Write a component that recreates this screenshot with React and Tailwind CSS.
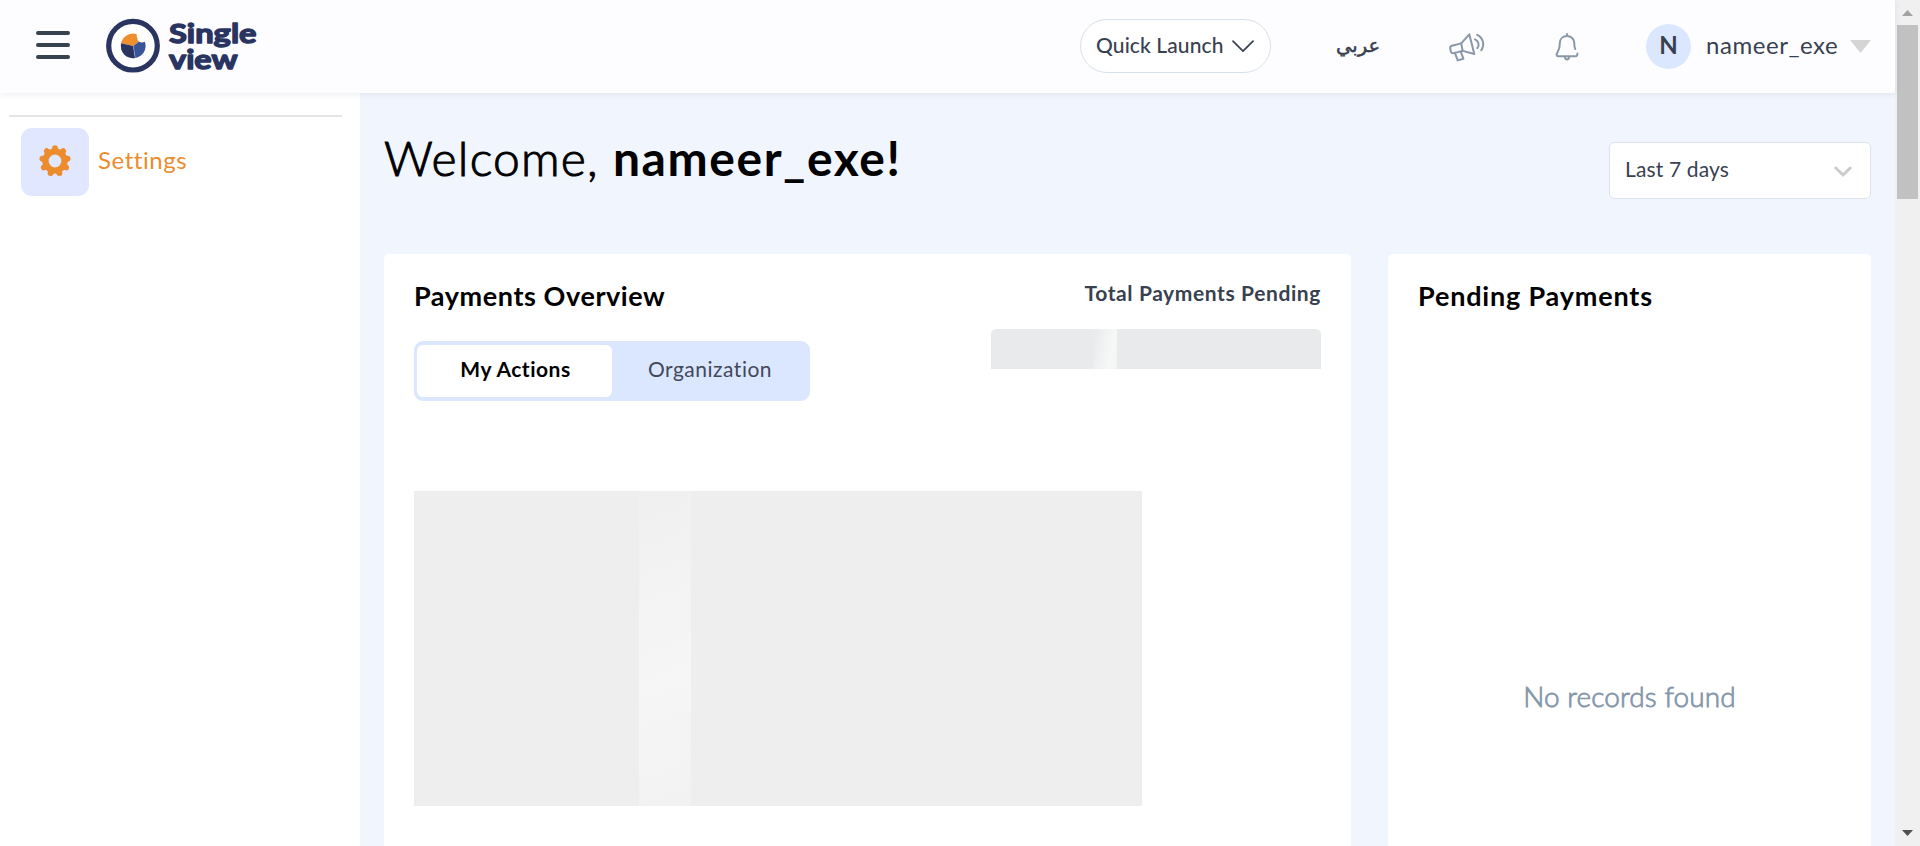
import React from "react";

function HamburgerButton() {
  return (
    <button className="-mt-0.5 flex h-7 w-[34px] flex-col justify-between" aria-label="Menu">
      <span className="h-1 w-full rounded-full bg-[#37444f]" />
      <span className="h-1 w-full rounded-full bg-[#37444f]" />
      <span className="h-1 w-full rounded-full bg-[#37444f]" />
    </button>
  );
}

function Logo() {
  return (
    <svg width="156" height="60" viewBox="0 0 156 60" className="ml-9">
      <circle cx="27" cy="29.7" r="24.3" fill="#fff" stroke="#2a3461" strokeWidth="5.2" />
      <path d="M27.3 30 L15.1 27.2 A12.2 12.2 0 0 1 30.8 18.2 Q30 20.8 31.4 22 Q31 24.6 33 25.6 Z" fill="#ee8e2d" />
      <path d="M27.3 30 L15.1 27.2 A12.2 12.2 0 0 0 29.2 42 Z" fill="#2a3461" />
      <path d="M27.3 30 L33 25.6 Q35.4 27.3 38.9 25.8 A12.2 12.2 0 0 1 29.2 42 Z" fill="#3a5597" />
      <path d="M27.3 30 L29.2 42" stroke="#c9cfe2" strokeWidth="0.4" />
      <g
        fill="#2a3461"
        stroke="#2a3461"
        strokeWidth="1.4"
        strokeLinejoin="round"
        fontFamily="Lato, sans-serif"
        fontWeight="700"
        fontSize="27.5"
      >
        <text x="63" y="27.4" textLength="87.5" lengthAdjust="spacingAndGlyphs">Single</text>
        <text x="63" y="53" textLength="68.5" lengthAdjust="spacingAndGlyphs">view</text>
      </g>
    </svg>
  );
}

function Megaphone() {
  return (
    <svg width="38" height="30" viewBox="0 0 38 30" fill="none" stroke="#8a97a8" strokeWidth="2" strokeLinecap="round" strokeLinejoin="round">
      <path d="M13.2 11.4 L21.3 2.3 L26.3 22 L14.6 18.9 Z" />
      <path d="M13.2 11.4 L4 13.7 Q1.7 14.3 2.2 16.6 L2.9 19.4 Q3.5 21.7 5.8 21.1 L14.6 18.9" />
      <path d="M7 21.2 L9.7 28.4 L15.4 26.7 L12.8 19.8" />
      <path d="M27 7.4 A5.6 5.6 0 0 1 29.3 16.2" />
      <path d="M29.2 2.8 A10.4 10.4 0 0 1 33.2 18.3" />
    </svg>
  );
}

function Bell() {
  return (
    <svg width="24" height="28" viewBox="0 0 24 28" fill="none" stroke="#8a97a8" strokeWidth="2" strokeLinecap="round" strokeLinejoin="round">
      <path d="M12 1 V3" />
      <path d="M20.3 16 Q19.3 14.4 19.3 10.4 C19.3 5.8 16 3 12 3 C8 3 4.8 5.8 4.8 10.4 C4.8 15.6 3.8 17 2.6 19 C1.2 21.6 1.4 23.2 3.2 23.2 H20.4 Q22.6 23.2 22.4 20.6" />
      <path d="M9.9 24.2 Q10.4 26.4 12 26.4 Q13.6 26.4 14.1 24.2" />
    </svg>
  );
}

const TEETH = [0, 40, 80, 120, 160, 200, 240, 280, 320];

function Gear() {
  return (
    <svg width="32" height="32" viewBox="0 0 32 32">
      <circle cx="16" cy="16" r="9.5" fill="none" stroke="#ec8c2c" strokeWidth="6.2" />
      {TEETH.map((a) => (
        <path
          key={a}
          d="M10.6 6 Q13 4.6 13.1 2.8 Q13.4 0.2 16 0.2 Q18.6 0.2 18.9 2.8 Q19 4.6 21.4 6 Z"
          fill="#ec8c2c"
          transform={`rotate(${a} 16 16)`}
        />
      ))}
    </svg>
  );
}

function Header() {
  return (
    <header className="z-10 flex h-[93px] shrink-0 items-center bg-[#fdfdff] pr-6 pl-9 text-[#394150] shadow-[0_1px_6px_rgba(60,70,120,0.10)]">
      <div className="-mt-0.5 flex items-center">
        <HamburgerButton />
        <Logo />
      </div>
      <button className="mb-0.5 ml-auto flex h-[54px] w-[191px] items-center rounded-full border border-[#d8e1ea] bg-white pb-0.5 pl-[15px]">
        <span className="text-[21px] font-medium tracking-[0.1px] whitespace-nowrap">Quick Launch</span>
        <svg width="22" height="13" viewBox="0 0 22 13" className="mt-1 ml-2" fill="none" stroke="#394150" strokeWidth="1.7" strokeLinecap="round" strokeLinejoin="round">
          <path d="M1 1.2 L11 11.2 L21 1.2" />
        </svg>
      </button>
      <span className="mb-0.5 ml-16 w-[46px] text-center font-['DejaVu_Sans',sans-serif] text-[19.5px] leading-6 [-webkit-text-stroke:0.5px_#394150]">عربي</span>
      <span className="ml-[67px]"><Megaphone /></span>
      <span className="ml-[69px]"><Bell /></span>
      <div className="ml-[67px] flex size-[45px] items-center justify-center rounded-full bg-[#dbe7ff] pb-[3px] text-2xl font-bold">N</div>
      <span className="ml-[15px] w-[133px] pb-1 text-2xl tracking-[0.55px] whitespace-nowrap">nameer_exe</span>
      <svg width="21" height="13" viewBox="0 0 21 13" className="ml-[11px]">
        <path d="M0 0 H21 L10.5 13 Z" fill="#d5d5d5" />
      </svg>
    </header>
  );
}

function Sidebar() {
  return (
    <aside className="w-[360px] shrink-0 bg-white pt-[22px]">
      <div className="ml-[9px] h-[2px] w-[333px] bg-[#e5e5e5]" />
      <a className="mt-[11px] ml-[21px] flex items-center">
        <span className="flex size-[68px] items-center justify-center rounded-[11px] bg-[#e1e7ff] pb-0.5">
          <Gear />
        </span>
        <span className="ml-[9px] pb-[5px] text-2xl tracking-[0.55px] text-[#ec8c2c]">Settings</span>
      </a>
    </aside>
  );
}

function PaymentsOverview() {
  return (
    <section className="h-[700px] w-[967px] rounded-[5px] bg-white px-[30px]">
      <div className="flex justify-between">
        <div className="pt-[22px]">
          <h2 className="h-10 text-[27px] leading-10 font-bold tracking-[0.58px] text-black">Payments Overview</h2>
          <div className="mt-[25px] flex h-[60px] w-[396px] items-center rounded-[9px] bg-[#dbe7ff] pl-[3px] text-[21px] tracking-[0.5px]">
            <div className="flex h-[52px] w-[195px] items-center justify-center rounded-md bg-white pb-1 pl-0.5 font-bold text-black">My Actions</div>
            <div className="flex h-[52px] flex-1 items-center justify-center pr-0.5 pb-1 text-[#42485a]">Organization</div>
          </div>
        </div>
        <div className="flex w-[330px] flex-col pt-[23px]">
          <h3 className="text-right text-[21px] leading-8 font-bold tracking-[0.6px] text-[#394150]">Total Payments Pending</h3>
          <div className="mt-5 flex h-10 overflow-hidden rounded-t-[5px] bg-[#e9eaeb]">
            <div className="ml-[102px] w-6 bg-[linear-gradient(100deg,#eaebec_10%,#f7f8f7_75%,#f1f2f2_100%)]" />
          </div>
        </div>
      </div>
      <div className="mt-[90px] flex h-[315px] w-[728px] bg-[#eeeeee]">
        <div className="ml-[225px] w-[52px] bg-[linear-gradient(160deg,#f0f0f0_5%,#f6f6f6_60%,#f1f1f1_105%)]" />
      </div>
    </section>
  );
}

function PendingPayments() {
  return (
    <section className="h-[700px] w-[483px] rounded-[5px] bg-white px-[30px] pt-[22px]">
      <h2 className="h-10 text-[27px] leading-10 font-bold tracking-[0.82px] text-black">Pending Payments</h2>
      <p className="mt-[360px] text-center text-[28px] leading-10 font-light tracking-[0.1px] text-[#8496ab] [-webkit-text-stroke:0.8px_#8496ab]">No records found</p>
    </section>
  );
}

function Main() {
  return (
    <main className="flex-1 bg-[#f1f5fd] pr-6 pl-6">
      <div className="flex justify-between">
        <h1 className="mt-[35px] flex h-[60px] items-center text-[48px] leading-[60px] text-black">
          <span className="w-[229px] font-light tracking-[1.2px] [-webkit-text-stroke:1px_black]">Welcome,</span>
          <span className="font-bold tracking-[1.55px]">nameer_exe!</span>
        </h1>
        <div className="mt-[49px] flex h-[57px] w-[262px] items-center justify-between rounded-[5px] border border-[#dde2ec] bg-white pr-[18px] pl-[15px] text-[21px] text-[#394150]">
          <span className="pb-[3px] tracking-[0.15px]">Last 7 days</span>
          <svg width="18" height="12" viewBox="0 0 18 12" className="mt-0.5" fill="none" stroke="#cbcbcb" strokeWidth="3" strokeLinecap="round" strokeLinejoin="round">
            <path d="M1.8 2 L9 9 L16.2 2" />
          </svg>
        </div>
      </div>
      <div className="mt-[55px] flex justify-between">
        <PaymentsOverview />
        <PendingPayments />
      </div>
    </main>
  );
}

function Scrollbar() {
  return (
    <div className="flex w-[25px] shrink-0 flex-col items-center bg-[#f0f0f0]">
      <svg width="11" height="6" viewBox="0 0 11 6" className="mt-2.5 shrink-0"><path d="M0 6 L5.5 0 L11 6 Z" fill="#a3a3a3" /></svg>
      <div className="mt-[9px] h-[174px] w-[21px] shrink-0 bg-[#c1c1c1]" />
      <svg width="11" height="6" viewBox="0 0 11 6" className="mt-auto mb-2.5 shrink-0"><path d="M0 0 H11 L5.5 6 Z" fill="#505050" /></svg>
    </div>
  );
}

export default function App() {
  return (
    <div className="flex h-[846px] w-[1920px] overflow-hidden bg-white font-['Lato',sans-serif]">
      <div className="flex min-w-0 flex-1 flex-col">
        <Header />
        <div className="flex min-h-0 flex-1 overflow-hidden">
          <Sidebar />
          <Main />
        </div>
      </div>
      <Scrollbar />
    </div>
  );
}
